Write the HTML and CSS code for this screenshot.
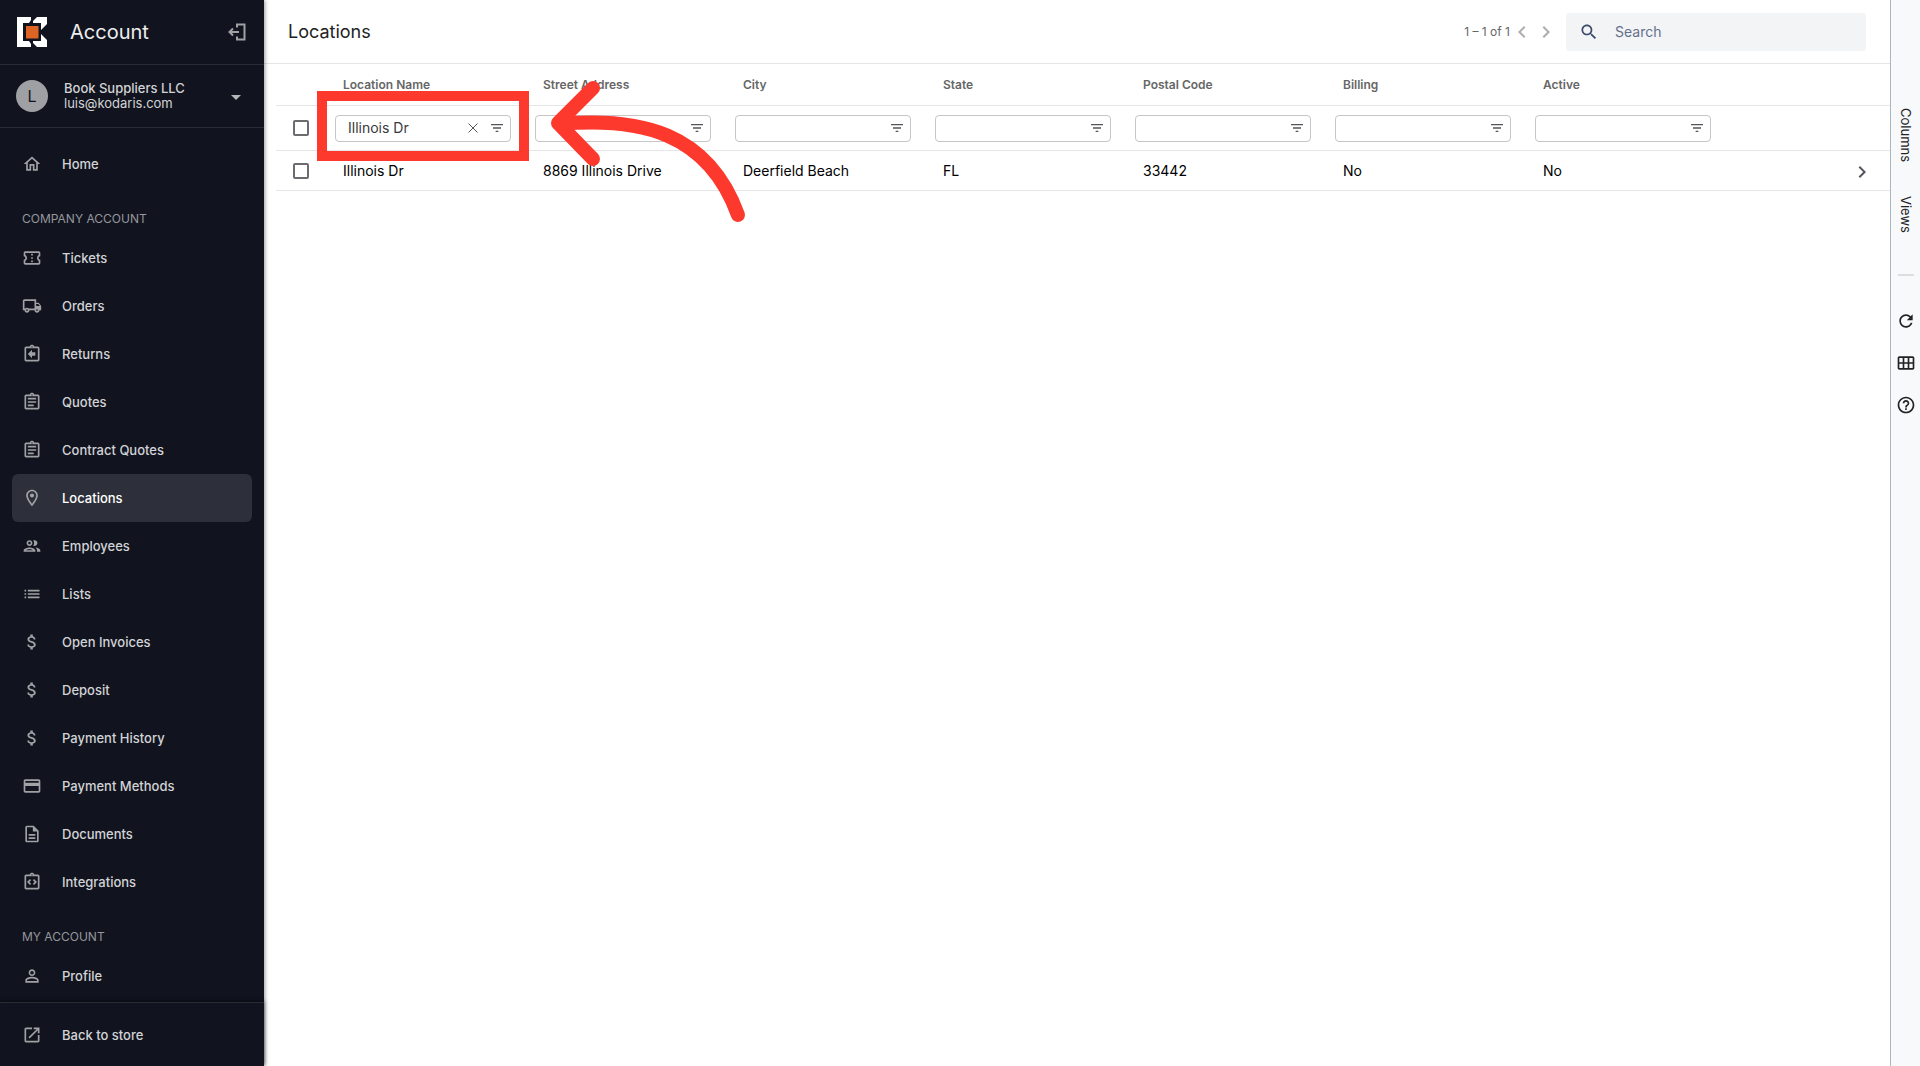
FILE: index.html
```html
<!DOCTYPE html>
<html lang="en">
<head>
<meta charset="utf-8">
<meta name="viewport" content="width=device-width, initial-scale=1">
<title>Locations</title>
<link rel="stylesheet" href="styles.css">
</head>
<body>
<svg class="sprite" aria-hidden="true">
  <symbol id="i-home" viewBox="0 0 24 24"><path d="M12 5.69l5 4.5V18h-2v-6H9v6H7v-7.81l5-4.5M12 3L2 12h3v8h6v-6h2v6h6v-8h3L12 3z"/></symbol>
  <symbol id="i-ticket" viewBox="0 0 24 24"><path d="M22 10V6c0-1.11-.9-2-2-2H4c-1.1 0-1.99.89-1.99 2v4c1.1 0 1.99.9 1.99 2s-.89 2-2 2v4c0 1.1.9 2 2 2h16c1.1 0 2-.9 2-2v-4c-1.1 0-2-.9-2-2s.9-2 2-2zm-2-1.46c-1.19.69-2 1.99-2 3.46s.81 2.77 2 3.46V18H4v-2.54c1.19-.69 2-1.99 2-3.46 0-1.48-.8-2.77-1.99-3.46L4 6h16v2.54zM11 15h2v2h-2zm0-4h2v2h-2zm0-4h2v2h-2z"/></symbol>
  <symbol id="i-truck" viewBox="0 0 24 24"><path d="M20 8h-3V4H3c-1.1 0-2 .9-2 2v11h2c0 1.66 1.34 3 3 3s3-1.34 3-3h6c0 1.66 1.34 3 3 3s3-1.34 3-3h2v-5l-3-4zm-.5 1.5l1.96 2.5H17V9.500h2.500zM6 18c-.55 0-1-.45-1-1s.45-1 1-1 1 .45 1 1-.45 1-1 1zm2.220-3c-.55-.61-1.330-1-2.220-1s-1.670.39-2.220 1H3V6h12v9H8.220zM18 18c-.55 0-1-.45-1-1s.45-1 1-1 1 .45 1 1-.45 1-1 1z"/></symbol>
  <symbol id="i-board" viewBox="0 0 24 24"><path d="M19 3h-4.180C14.400 1.840 13.300 1 12 1s-2.400.84-2.820 2H5c-1.100 0-2 .9-2 2v14c0 1.100.9 2 2 2h14c1.100 0 2-.9 2-2V5c0-1.100-.9-2-2-2zm-7-.25c.41 0 .75.34.75.75s-.34.75-.75.75-.75-.34-.75-.75.34-.75.75-.75zM19 19H5V5h14v14z"/></symbol>
  <symbol id="i-return" viewBox="0 0 24 24"><use href="#i-board"/><path d="M16 10h-4V7l-5 5 5 5v-3h4z"/></symbol>
  <symbol id="i-quote" viewBox="0 0 24 24"><use href="#i-board"/><path d="M7 15h7v2H7zM7 11h10v2H7zM7 7h10v2H7z"/></symbol>
  <symbol id="i-code" viewBox="0 0 24 24"><use href="#i-board"/><path d="M11 14.170L8.830 12 11 9.830 9.590 8.410 6 12l3.590 3.590zM14.410 15.590L18 12l-3.590-3.590L13 9.830 15.170 12 13 14.170z"/></symbol>
  <symbol id="i-pin" viewBox="0 0 24 24"><path d="M12 2C8.130 2 5 5.130 5 9c0 5.250 7 13 7 13s7-7.750 7-13c0-3.870-3.130-7-7-7zM7 9c0-2.760 2.240-5 5-5s5 2.240 5 5c0 2.880-2.880 7.190-5 9.880C9.920 16.210 7 11.850 7 9z"/><circle cx="12" cy="9" r="2.500"/></symbol>
  <symbol id="i-people" viewBox="0 0 24 24"><path d="M9 13.750c-2.340 0-7 1.170-7 3.500V19h14v-1.750c0-2.330-4.660-3.500-7-3.500zM4.340 17c.84-.58 2.870-1.250 4.660-1.250s3.820.67 4.660 1.250H4.340zM9 12c1.930 0 3.500-1.570 3.500-3.500S10.930 5 9 5 5.500 6.570 5.500 8.500 7.070 12 9 12zm0-5c.83 0 1.500.67 1.500 1.500S9.830 10 9 10s-1.500-.67-1.500-1.500S8.170 7 9 7zm7.040 6.810c1.160.84 1.960 1.960 1.960 3.440V19h4v-1.750c0-2.020-3.500-3.170-5.960-3.440zM15 12c1.930 0 3.500-1.570 3.500-3.500S16.930 5 15 5c-.54 0-1.040.13-1.500.35.63.89 1 1.980 1 3.150s-.37 2.260-1 3.150c.46.22.96.35 1.500.35z"/></symbol>
  <symbol id="i-list" viewBox="0 0 24 24"><path d="M3 11h2v2H3zM3 15h2v2H3zM3 7h2v2H3zM7 11h14v2H7zM7 15h14v2H7zM7 7h14v2H7z"/></symbol>
  <symbol id="i-dollar" viewBox="0 0 24 24"><path d="M11.800 10.900c-2.270-.59-3-1.200-3-2.150 0-1.090 1.010-1.850 2.700-1.850 1.780 0 2.440.85 2.500 2.100h2.210c-.07-1.720-1.120-3.300-3.210-3.810V3h-3v2.160c-1.940.42-3.500 1.680-3.500 3.610 0 2.310 1.910 3.460 4.700 4.130 2.500.6 3 1.480 3 2.410 0 .69-.49 1.790-2.700 1.790-2.060 0-2.870-.92-2.980-2.100h-2.200c.12 2.190 1.760 3.420 3.680 3.830V21h3v-2.150c1.950-.37 3.500-1.500 3.500-3.550 0-2.840-2.430-3.810-4.700-4.400z"/></symbol>
  <symbol id="i-card" viewBox="0 0 24 24"><path d="M20 4H4c-1.110 0-1.990.89-1.990 2L2 18c0 1.110.89 2 2 2h16c1.110 0 2-.89 2-2V6c0-1.110-.89-2-2-2zm0 14H4v-6h16v6zm0-10H4V6h16v2z"/></symbol>
  <symbol id="i-doc" viewBox="0 0 24 24"><path d="M8 16h8v2H8zm0-4h8v2H8zm6-10H6c-1.100 0-2 .9-2 2v16c0 1.100.89 2 1.990 2H18c1.100 0 2-.9 2-2V8l-6-6zm4 18H6V4h7v5h5v11z"/></symbol>
  <symbol id="i-person" viewBox="0 0 24 24"><path d="M12 5.900c1.160 0 2.100.94 2.100 2.100s-.94 2.100-2.100 2.100S9.900 9.160 9.900 8s.94-2.100 2.100-2.100m0 9c2.970 0 6.100 1.460 6.100 2.100v1.100H5.900V17c0-.64 3.130-2.100 6.100-2.100M12 4C9.790 4 8 5.790 8 8s1.790 4 4 4 4-1.790 4-4-1.790-4-4-4zm0 9c-2.670 0-8 1.340-8 4v3h16v-3c0-2.660-5.330-4-8-4z"/></symbol>
  <symbol id="i-open" viewBox="0 0 24 24"><path d="M19 19H5V5h7V3H5c-1.110 0-2 .9-2 2v14c0 1.100.89 2 2 2h14c1.100 0 2-.9 2-2v-7h-2v7zM14 3v2h3.590l-9.830 9.830 1.410 1.410L19 6.410V10h2V3h-7z"/></symbol>
  <symbol id="i-filter" viewBox="0 0 24 24"><path d="M10 18h4v-2h-4v2zM3 6v2h18V6H3zm3 7h12v-2H6v2z"/></symbol>
  <symbol id="i-left" viewBox="0 0 24 24"><path d="M15.410 7.410L14 6l-6 6 6 6 1.410-1.410L10.830 12z"/></symbol>
  <symbol id="i-right" viewBox="0 0 24 24"><path d="M8.590 16.590L13.170 12 8.590 7.410 10 6l6 6-6 6z"/></symbol>
</svg>

<div class="app">
  <aside class="sidebar">
    <header class="brand">
      <svg class="logo" viewBox="0 0 30 30" role="img" aria-label="Kodaris">
        <path class="logo-mark" d="M0 0H14V3L12 6H6V24H12L14 27V30H0zM20 0H30V7L24 13V6H16V4zM24 17L30 23V30H20L16 26V24H24z"/>
        <path class="logo-core" d="M9 9h12.500v12.500H9z"/>
      </svg>
      <h2 class="brand-name">Account</h2>
      <button class="icon-button exit" type="button" aria-label="Sign out">
        <svg class="icon" viewBox="0 0 20 20"><path class="stroke" d="M10 5.500V2.500h7.500v15H10V14.500M12 10H3M6 6.500L2.500 10l3.500 3.500"/></svg>
      </button>
    </header>
    <button class="account" type="button">
      <span class="avatar">L</span>
      <span class="account-text"><span class="company">Book Suppliers LLC</span><span class="email">luis@kodaris.com</span></span>
      <svg class="caret" viewBox="0 0 10 8"><path d="M0 3h10L5 8z"/></svg>
    </button>
    <nav class="nav">
      <a class="nav-item" href="#"><svg class="icon"><use href="#i-home"/></svg>Home</a>
      <h3 class="nav-title">COMPANY ACCOUNT</h3>
      <a class="nav-item" href="#"><svg class="icon"><use href="#i-ticket"/></svg>Tickets</a>
      <a class="nav-item" href="#"><svg class="icon"><use href="#i-truck"/></svg>Orders</a>
      <a class="nav-item" href="#"><svg class="icon"><use href="#i-return"/></svg>Returns</a>
      <a class="nav-item" href="#"><svg class="icon"><use href="#i-quote"/></svg>Quotes</a>
      <a class="nav-item" href="#"><svg class="icon"><use href="#i-quote"/></svg>Contract Quotes</a>
      <a class="nav-item active" href="#" aria-current="page"><svg class="icon"><use href="#i-pin"/></svg>Locations</a>
      <a class="nav-item" href="#"><svg class="icon"><use href="#i-people"/></svg>Employees</a>
      <a class="nav-item" href="#"><svg class="icon"><use href="#i-list"/></svg>Lists</a>
      <a class="nav-item" href="#"><svg class="icon"><use href="#i-dollar"/></svg>Open Invoices</a>
      <a class="nav-item" href="#"><svg class="icon"><use href="#i-dollar"/></svg>Deposit</a>
      <a class="nav-item" href="#"><svg class="icon"><use href="#i-dollar"/></svg>Payment History</a>
      <a class="nav-item" href="#"><svg class="icon"><use href="#i-card"/></svg>Payment Methods</a>
      <a class="nav-item" href="#"><svg class="icon"><use href="#i-doc"/></svg>Documents</a>
      <a class="nav-item" href="#"><svg class="icon"><use href="#i-code"/></svg>Integrations</a>
      <h3 class="nav-title">MY ACCOUNT</h3>
      <a class="nav-item" href="#"><svg class="icon"><use href="#i-person"/></svg>Profile</a>
    </nav>
    <footer class="side-foot">
      <a class="nav-item" href="#"><svg class="icon"><use href="#i-open"/></svg>Back to store</a>
    </footer>
  </aside>

  <main class="main">
    <header class="toolbar">
      <h1 class="title">Locations</h1>
      <span class="range">1 – 1 of 1</span>
      <div class="pager">
        <button class="icon-button" type="button" aria-label="Previous page"><svg class="icon icon-large"><use href="#i-left"/></svg></button>
        <button class="icon-button" type="button" aria-label="Next page"><svg class="icon icon-large"><use href="#i-right"/></svg></button>
      </div>
      <label class="search">
        <svg class="icon" viewBox="0 0 24 24"><path d="M15.500 14h-.79l-.28-.27C15.410 12.590 16 11.110 16 9.500 16 5.910 13.090 3 9.500 3S3 5.910 3 9.500 5.910 16 9.500 16c1.610 0 3.090-.59 4.230-1.570l.27.28v.79l5 4.990L20.490 19l-4.990-5zm-6 0C7.010 14 5 11.990 5 9.500S7.010 5 9.500 5 14 7.010 14 9.500 11.990 14 9.500 14z"/></svg>
        <input type="search" placeholder="Search" aria-label="Search">
      </label>
    </header>

    <div class="grid">
      <table class="table">
        <colgroup>
          <col class="col-check"><col class="col-data"><col class="col-data"><col class="col-data"><col class="col-data"><col class="col-data"><col class="col-data"><col class="col-data"><col><col class="col-check">
        </colgroup>
        <thead>
          <tr class="row-head">
            <td></td><th scope="col">Location Name</th><th scope="col">Street Address</th><th scope="col">City</th><th scope="col">State</th><th scope="col">Postal Code</th><th scope="col">Billing</th><th scope="col">Active</th><td></td><td></td>
          </tr>
          <tr class="row-filter">
            <td class="cell-check"><input class="check" type="checkbox" aria-label="Select all"></td>
            <td><div class="filter"><input type="text" value="Illinois Dr" aria-label="Filter by location name"><button class="icon-button" type="button" aria-label="Clear"><svg class="icon" viewBox="0 0 16 16"><path class="thin" d="M3.500 3.500l9 9M12.500 3.500l-9 9"/></svg></button><button class="icon-button" type="button" aria-label="Filter type"><svg class="icon"><use href="#i-filter"/></svg></button></div></td>
            <td><div class="filter"><input type="text" aria-label="Filter by street address"><button class="icon-button" type="button" aria-label="Filter type"><svg class="icon"><use href="#i-filter"/></svg></button></div></td>
            <td><div class="filter"><input type="text" aria-label="Filter by city"><button class="icon-button" type="button" aria-label="Filter type"><svg class="icon"><use href="#i-filter"/></svg></button></div></td>
            <td><div class="filter"><input type="text" aria-label="Filter by state"><button class="icon-button" type="button" aria-label="Filter type"><svg class="icon"><use href="#i-filter"/></svg></button></div></td>
            <td><div class="filter"><input type="text" aria-label="Filter by postal code"><button class="icon-button" type="button" aria-label="Filter type"><svg class="icon"><use href="#i-filter"/></svg></button></div></td>
            <td><div class="filter"><input type="text" aria-label="Filter by billing"><button class="icon-button" type="button" aria-label="Filter type"><svg class="icon"><use href="#i-filter"/></svg></button></div></td>
            <td><div class="filter"><input type="text" aria-label="Filter by active"><button class="icon-button" type="button" aria-label="Filter type"><svg class="icon"><use href="#i-filter"/></svg></button></div></td>
            <td></td><td></td>
          </tr>
        </thead>
        <tbody>
          <tr class="row-data">
            <td class="cell-check"><input class="check" type="checkbox" aria-label="Select Illinois Dr"></td>
            <td>Illinois Dr</td><td>8869 Illinois Drive</td><td>Deerfield Beach</td><td>FL</td><td>33442</td><td>No</td><td>No</td><td></td>
            <td class="cell-open"><button class="icon-button" type="button" aria-label="Open Illinois Dr"><svg class="icon icon-large"><use href="#i-right"/></svg></button></td>
          </tr>
        </tbody>
      </table>
      <svg class="callout" viewBox="0 0 440 140" aria-hidden="true">
        <rect class="callout-box" x="46" y="32" width="202" height="60"/>
        <path class="callout-arrow" d="M317 24L282 59L317 95M284 60C364 53 432 68 462 151"/>
      </svg>
    </div>
  </main>

  <aside class="rail">
    <button class="rail-tab" type="button">Columns</button>
    <button class="rail-tab" type="button">Views</button>
    <hr class="rail-rule">
    <button class="icon-button" type="button" aria-label="Refresh"><svg class="icon" viewBox="0 0 24 24"><path d="M17.650 6.350C16.200 4.900 14.210 4 12 4c-4.420 0-7.990 3.580-7.990 8s3.570 8 7.990 8c3.730 0 6.840-2.550 7.730-6h-2.080c-.82 2.330-3.040 4-5.650 4-3.310 0-6-2.690-6-6s2.690-6 6-6c1.660 0 3.140.69 4.220 1.780L13 11h7V4l-2.350 2.350z"/></svg></button>
    <button class="icon-button" type="button" aria-label="Table view"><svg class="icon" viewBox="0 0 24 24"><path d="M20 4H4c-1.100 0-2 .9-2 2v12c0 1.100.9 2 2 2h16c1.100 0 2-.9 2-2V6c0-1.100-.9-2-2-2zM8 11H4V6h4v5zm6 0h-4V6h4v5zm6 0h-4V6h4v5zM8 18H4v-5h4v5zm6 0h-4v-5h4v5zm6 0h-4v-5h4v5z"/></svg></button>
    <button class="icon-button" type="button" aria-label="Help"><svg class="icon" viewBox="0 0 24 24"><path d="M11 18h2v-2h-2v2zm1-16C6.480 2 2 6.480 2 12s4.480 10 10 10 10-4.480 10-10S17.520 2 12 2zm0 18c-4.410 0-8-3.590-8-8s3.590-8 8-8 8 3.590 8 8-3.590 8-8 8zm0-14c-2.210 0-4 1.790-4 4h2c0-1.100.9-2 2-2s2 .9 2 2c0 2-3 1.750-3 5h2c0-2.250 3-2.500 3-5 0-2.210-1.790-4-4-4z"/></svg></button>
  </aside>
</div>
</body>
</html>
```
FILE: styles.css
```css
* { box-sizing: border-box; }
body { margin: 0; background: #fff; font: 14px/20px Inter, sans-serif; color: #000; }
button, input { font: inherit; color: inherit; }
button { border: 0; padding: 0; background: none; cursor: pointer; }
h1, h2, h3 { margin: 0; font-weight: 400; }
a { color: inherit; text-decoration: none; }
.sprite { position: absolute; width: 0; height: 0; }
.icon { display: block; width: 20px; height: 20px; fill: currentColor; flex: none; }
.icon-large { width: 24px; height: 24px; }
.icon-button { display: flex; align-items: center; justify-content: center; flex: none; }
.stroke { fill: none; stroke: currentColor; stroke-width: 2; }
.thin { fill: none; stroke: currentColor; stroke-width: 1; }

.app { display: flex; min-height: 100vh; }

/* Sidebar */
.sidebar { position: sticky; top: 0; z-index: 1; display: flex; flex-direction: column; flex: none; width: 264px; height: 100vh; background: #11141f; color: #d2d3d6; box-shadow: 1px 0 4px rgba(0, 0, 0, .4); }
.brand { display: flex; align-items: center; flex: none; height: 65px; padding: 0 17px; border-bottom: 1px solid #292c36; }
.logo { width: 30px; height: 30px; }
.logo-mark { fill: #fff; }
.logo-core { fill: #de6426; }
.brand-name { flex: 1; padding-left: 23px; font-size: 20px; line-height: 24px; color: #eeeeef; }
.exit { width: 20px; height: 20px; color: #a0a1a5; }
.account { display: flex; align-items: center; flex: none; height: 63px; padding: 0 23px 0 16px; border-bottom: 1px solid #292c36; text-align: left; }
.avatar { width: 32px; height: 32px; border-radius: 50%; background: #9fa0a4; color: #11141f; font-size: 16px; line-height: 32px; text-align: center; }
.account-text { flex: 1; padding-left: 16px; font-size: 13px; line-height: 15px; }
.company, .email { display: block; }
.company { font-weight: 500; }
.caret { width: 10px; height: 8px; fill: #b4b5b8; }
.nav { flex: 1; min-height: 0; padding: 12px 12px 0; overflow: hidden; }
.nav-item { display: flex; align-items: center; gap: 20px; height: 48px; padding: 0 10px; border-radius: 6px; font-size: 13px; font-weight: 500; }
.nav-item .icon { color: #a0a1a5; }
.nav-item.active { background: #2d303a; color: #fff; }
.nav-title { height: 46px; padding: 21px 10px 0; font-size: 12px; line-height: 20px; color: #96979c; }
.side-foot { flex: none; height: 64px; padding: 8px 12px; border-top: 1px solid #292c36; box-shadow: 0 -1px 4px rgba(0, 0, 0, .6); }

/* Main */
.main { flex: 1; min-width: 0; }
.toolbar { display: flex; align-items: center; height: 64px; padding: 0 24px; border-bottom: 1px solid #e6e6e6; }
.title { flex: 1; font-size: 18px; line-height: 24px; color: #212224; }
.range { font-size: 12px; color: #666; }
.pager { display: flex; padding-right: 8px; color: #adadad; }
.search { display: flex; align-items: center; gap: 16px; width: 300px; height: 38px; padding: 0 13px; border-radius: 4px; background: #f3f4f6; color: #3b4a6b; }
.search input { flex: 1; min-width: 0; padding: 0; border: 0; outline: 0; background: none; }
.search input::placeholder { color: #64708a; opacity: 1; }

.grid { position: relative; padding-left: 12px; }
.table { width: 100%; table-layout: fixed; border-spacing: 0; }
.col-check { width: 50px; }
.col-data { width: 200px; }
.table td, .table th { padding: 0 17px; border-bottom: 1px solid #e6e6e6; text-align: left; white-space: nowrap; }
.table th { font-size: 12px; font-weight: 600; color: #666; }
.row-head { height: 42px; }
.row-filter { height: 45px; }
.row-data { height: 40px; }
.table .row-filter td { padding: 0 15px 0 9px; }
.table .cell-check, .table .row-filter .cell-check { padding: 0; }
.check { display: block; appearance: none; width: 16px; height: 16px; margin: 0 auto; border: 2px solid #6b6b70; border-radius: 2px; background: #fff; }
.check:checked { background: #6b6b70; }
.filter { display: flex; align-items: center; gap: 8px; height: 27px; padding: 0 5px 0 12px; border: 1px solid #c6c6c8; border-radius: 4px; color: #55565c; }
.filter input { flex: 1; width: 0; padding: 0; border: 0; outline: 0; background: none; color: #38393d; }
.filter .icon { width: 16px; height: 16px; }
.table .cell-open { padding: 2px 10px 0; color: #55565c; }

/* Highlight over the filtered column */
.callout { position: absolute; top: 0; left: 12px; width: 440px; height: 140px; overflow: visible; fill: none; stroke: #fd382d; pointer-events: none; }
.callout-box { stroke-width: 10px; }
.callout-arrow { stroke-width: 14px; stroke-linecap: round; stroke-linejoin: round; }

/* Right rail */
.rail { display: flex; flex-direction: column; align-items: center; flex: none; width: 30px; padding-top: 104px; border-left: 1px solid #adb5bd; background: #f8f9fb; color: #212224; }
.rail-tab { writing-mode: vertical-rl; margin-bottom: 26px; padding: 4px 0; font-size: 13px; line-height: 16px; }
.rail-rule { width: 16px; height: 2px; margin: 11px 0 35px; border: 0; background: #dcdddf; }
.rail .icon-button { height: 20px; margin-bottom: 22px; }
```
